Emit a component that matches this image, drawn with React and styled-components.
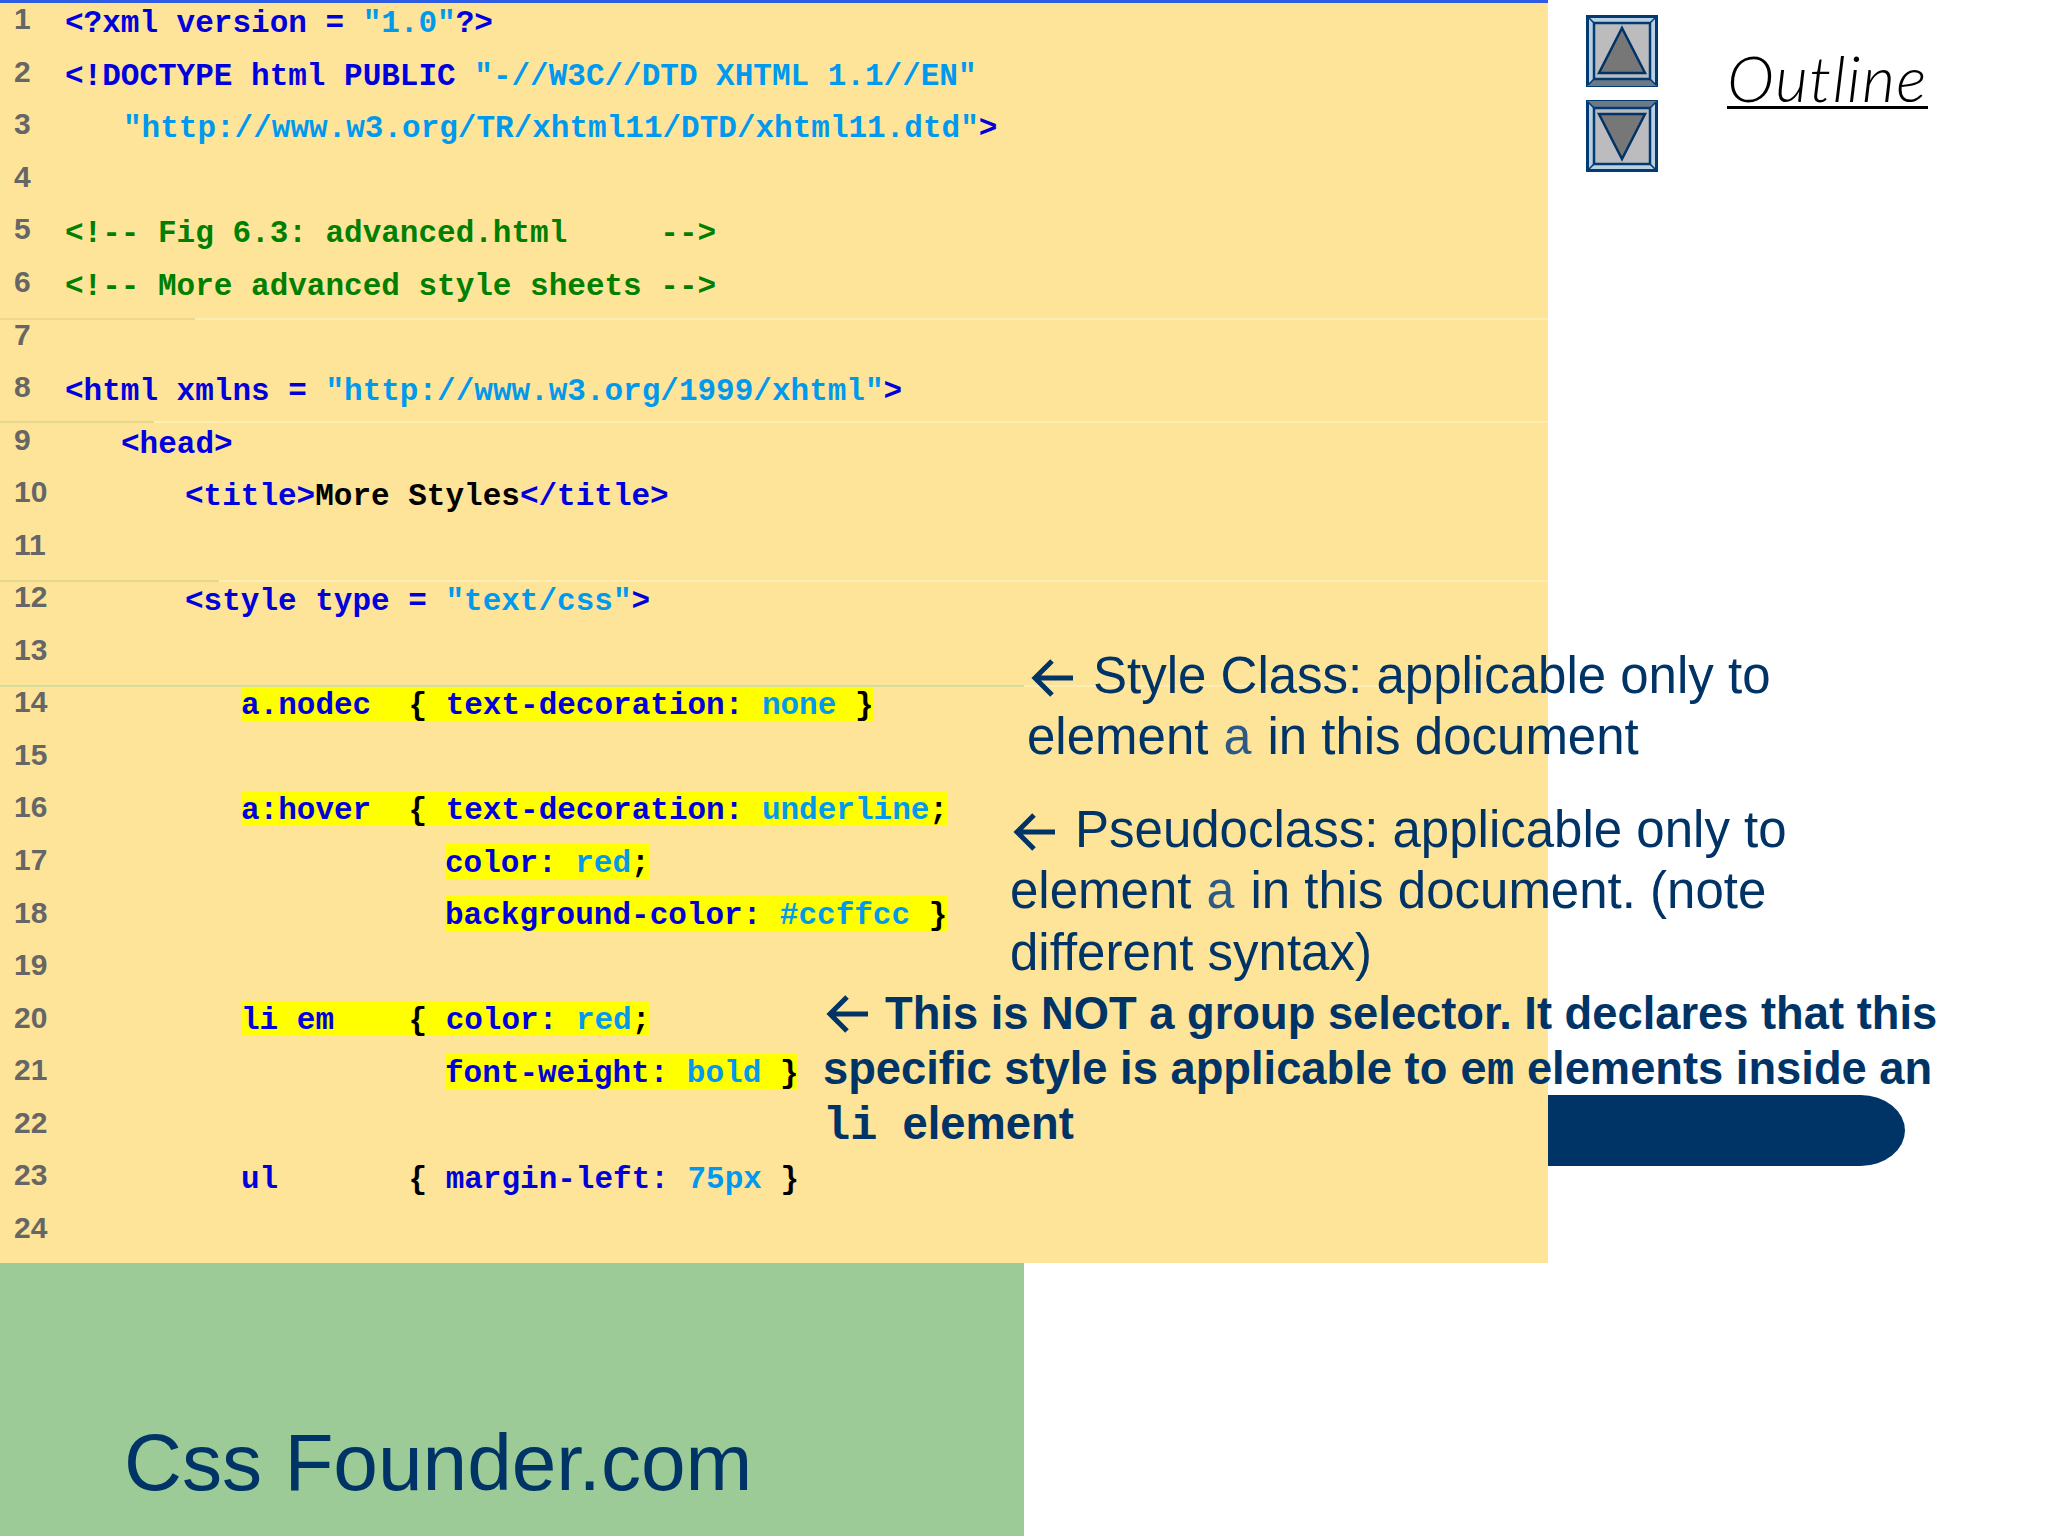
import React from "react";
import styled, { createGlobalStyle } from "styled-components";

const GlobalStyle = createGlobalStyle`
  html, body { margin: 0; padding: 0; background: #fff; }
`;

const Slide = styled.div`
  position: relative;
  width: 2048px;
  height: 1536px;
  overflow: hidden;
  display: flex;
  flex-direction: column;
  background: #fff;
  font-family: "Liberation Sans", Arial, sans-serif;
  color: #003366;
`;

const Top = styled.div`
  display: flex;
  height: 1263px;
`;

const CodePanel = styled.div`
  position: relative;
  z-index: 1;
  width: 1548px;
  flex: none;
  background: #fee498;
  box-shadow: inset 0 3px 0 #2f5ce2;
  overflow: hidden;
`;

const Rows = styled.div`
  margin-top: -4px;
`;

const Row = styled.div`
  display: flex;
  align-items: center;
  height: 52.55px;
`;

const Num = styled.div`
  width: ${({ $indent }) => $indent}px;
  flex: none;
  box-sizing: border-box;
  padding: 0 0 6px 14px;
  font-size: 30px;
  font-weight: 700;
  color: #666;
`;

const Code = styled.div`
  margin-top: 3px;
  font-family: "Liberation Mono", "Courier New", monospace;
  font-size: 31px;
  line-height: 35px;
  font-weight: 700;
  white-space: pre;
  color: #0000dd;
`;

const Str = styled.span`
  color: #0099ee;
`;

const Comment = styled.span`
  color: #007f00;
`;

const Plain = styled.span`
  color: #000;
`;

const Mark = styled.span`
  display: inline-block;
  height: 35px;
  line-height: 39px;
  vertical-align: top;
  margin-top: -3.5px;
  background: #ffff00;
`;

const Seam = styled.div`
  position: absolute;
  left: 0;
  right: 0;
  top: ${({ $top }) => $top}px;
  height: 2px;
  background: linear-gradient(
    to right,
    ${({ $tone }) => $tone} ${({ $split }) => $split}px,
    #ffeeb4 ${({ $split }) => $split}px
  );
`;

const Side = styled.div`
  display: flex;
  align-items: flex-start;
  padding: 15px 0 0 38px;
`;

const Nav = styled.div`
  display: flex;
  flex-direction: column;
  gap: 13px;
`;

const Outline = styled.div`
  margin: 31px 0 0 69px;
  padding-top: 4px;
  font-family: "Lato", sans-serif;
  font-size: 64px;
  font-style: italic;
  font-weight: 300;
  letter-spacing: 1.3px;
  line-height: 56px;
  color: #000;
  border-bottom: 3px solid #000;
`;

const Footer = styled.div`
  width: 1024px;
  flex: 1;
  box-sizing: border-box;
  display: flex;
  align-items: flex-end;
  padding: 0 0 25px 124px;
  background: #9ccb98;
`;

const Brand = styled.div`
  font-size: 80.2px;
  line-height: 98px;
  color: #003366;
`;

const Pill = styled.div`
  position: absolute;
  left: 1400px;
  top: 1095px;
  width: 505px;
  height: 71px;
  background: #003366;
  border-radius: 0 45px 45px 0 / 0 36px 36px 0;
`;

const Note = styled.div`
  position: absolute;
  z-index: 2;
  left: ${({ $x }) => $x}px;
  top: ${({ $y }) => $y}px;
  font-size: ${({ $bold }) => ($bold ? 45.3 : 51)}px;
  font-weight: ${({ $bold }) => ($bold ? 700 : 400)};
  line-height: ${({ $bold }) => ($bold ? 55 : 61.4)}px;
  white-space: pre;
  color: #003366;
`;

const NoteLine = styled.div`
  height: ${({ $bold }) => ($bold ? 55 : 61.4)}px;
  padding-left: ${({ $inset }) => $inset || 0}px;
`;

const Arrow = styled.svg`
  display: inline-block;
  width: 44px;
  height: 38px;
  margin-right: ${({ $gap }) => $gap}px;
  vertical-align: -4px;
`;

const Mono = styled.span`
  font-family: "Liberation Mono", "Courier New", monospace;
  font-size: ${({ $bold }) => ($bold ? 45.3 : 51)}px;
  font-weight: ${({ $bold }) => ($bold ? 700 : 400)};
  line-height: 0;
  color: ${({ $bold }) => ($bold ? "#003366" : "#2c5a85")};
`;

const NavButton = ({ down }) => (
  <svg width="72" height="72" viewBox="0 0 72 72">
    <rect x="1.5" y="1.5" width="69" height="69" fill="#bdd0e2" stroke="#003b73" strokeWidth="3" />
    <path d={down ? "M1 1H71L62 10H10Z" : "M1 71H71L62 62H10Z"} fill="#6d7a86" />
    <rect x="8" y="8" width="56" height="56" fill="#bcbcbe" stroke="#003b73" strokeWidth="2.5" />
    <path d="M2 2L9 9M70 2L63 9M2 70L9 63M70 70L63 63" stroke="#003b73" strokeWidth="1.5" />
    <path
      d={down ? "M13 14H59L36 59Z" : "M36 13L59 58H13Z"}
      fill="#777"
      stroke="#003366"
      strokeWidth="2.5"
      strokeLinejoin="miter"
    />
  </svg>
);

const NoteArrow = ({ gap }) => (
  <Arrow $gap={gap} viewBox="0 0 44 38">
    <path d="M42 19H5M21 2L4 19L21 36" fill="none" stroke="#003366" strokeWidth="5" />
  </Arrow>
);

const rows = [
  [65, <>{"<?xml version = "}<Str>"1.0"</Str>{"?>"}</>],
  [65, <>{"<!DOCTYPE html PUBLIC "}<Str>"-//W3C//DTD XHTML 1.1//EN"</Str></>],
  [123, <><Str>"http://www.w3.org/TR/xhtml11/DTD/xhtml11.dtd"</Str>{">"}</>],
  [65, null],
  [65, <Comment>{"<!-- Fig 6.3: advanced.html     -->"}</Comment>],
  [65, <Comment>{"<!-- More advanced style sheets -->"}</Comment>],
  [65, null],
  [65, <>{"<html xmlns = "}<Str>"http://www.w3.org/1999/xhtml"</Str>{">"}</>],
  [121, "<head>"],
  [185, <>{"<title>"}<Plain>More Styles</Plain>{"</title>"}</>],
  [65, null],
  [185, <>{"<style type = "}<Str>"text/css"</Str>{">"}</>],
  [65, null],
  [241, <Mark>{"a.nodec  "}<Plain>{"{"}</Plain>{" text-decoration: "}<Str>none</Str>{" "}<Plain>{"}"}</Plain></Mark>],
  [65, null],
  [241, <Mark>{"a:hover  "}<Plain>{"{"}</Plain>{" text-decoration: "}<Str>underline</Str><Plain>;</Plain></Mark>],
  [445, <Mark>{"color: "}<Str>red</Str><Plain>;</Plain></Mark>],
  [445, <Mark>{"background-color: "}<Str>#ccffcc</Str>{" "}<Plain>{"}"}</Plain></Mark>],
  [65, null],
  [241, <Mark>{"li em    "}<Plain>{"{"}</Plain>{" color: "}<Str>red</Str><Plain>;</Plain></Mark>],
  [445, <Mark>{"font-weight: "}<Str>bold</Str>{" "}<Plain>{"}"}</Plain></Mark>],
  [65, null],
  [241, <>{"ul       "}<Plain>{"{"}</Plain>{" margin-left: "}<Str>75px</Str>{" "}<Plain>{"}"}</Plain></>],
  [65, null],
];

const seams = [
  { top: 318, split: 195, tone: "#ecd88e" },
  { top: 421, split: 154, tone: "#e6d88e" },
  { top: 580, split: 219, tone: "#e6d88e" },
  { top: 685, split: 1024, tone: "#d6dc9a" },
];

export default function App() {
  return (
    <Slide>
      <GlobalStyle />
      <Pill />
      <Top>
        <CodePanel>
          <Rows>
            {rows.map(([indent, content], i) => (
              <Row key={i}>
                <Num $indent={indent}>{i + 1}</Num>
                {content && <Code>{content}</Code>}
              </Row>
            ))}
          </Rows>
          {seams.map((s) => (
            <Seam key={s.top} $top={s.top} $split={s.split} $tone={s.tone} />
          ))}
        </CodePanel>
        <Side>
          <Nav>
            <NavButton />
            <NavButton down />
          </Nav>
          <Outline>Outline</Outline>
        </Side>
      </Top>
      <Footer>
        <Brand>Css Founder.com</Brand>
      </Footer>

      <Note $x={1027} $y={645}>
        <NoteLine $inset={4}><NoteArrow gap={18} />Style Class: applicable only to</NoteLine>
        <NoteLine>element <Mono>a</Mono> in this document</NoteLine>
      </Note>
      <Note $x={1010} $y={799}>
        <NoteLine $inset={3}><NoteArrow gap={18} />Pseudoclass: applicable only to</NoteLine>
        <NoteLine>element <Mono>a</Mono> in this document. (note</NoteLine>
        <NoteLine>different syntax)</NoteLine>
      </Note>
      <Note $x={823} $y={986} $bold>
        <NoteLine $bold $inset={3}><NoteArrow gap={15} />This is NOT a group selector. It declares that this</NoteLine>
        <NoteLine $bold>specific style is applicable to <Mono $bold>em</Mono> elements inside an</NoteLine>
        <NoteLine $bold><Mono $bold>li</Mono>  element</NoteLine>
      </Note>
    </Slide>
  );
}
